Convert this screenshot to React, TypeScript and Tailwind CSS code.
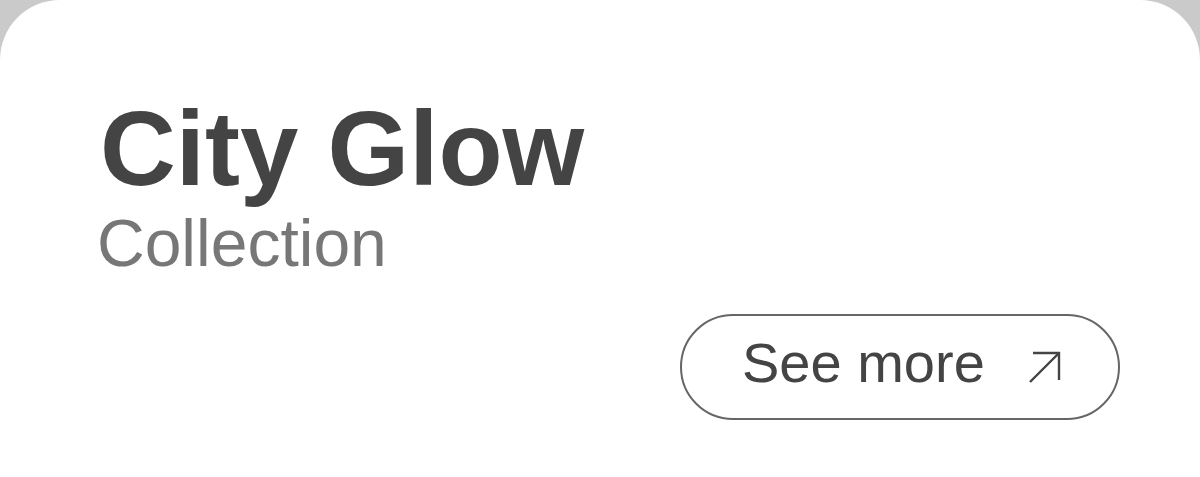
export default function App() {
  return (
    <main className="w-[1200px] h-[477px] bg-[#cacaca] overflow-hidden">
      <div className="h-full bg-white rounded-t-[60px] flex flex-col pl-[100px] pr-[80px] pt-[96px] font-['Liberation_Sans',Arial,sans-serif]">
        <h1 className="text-[105px] leading-none font-bold text-[#444444]">
          City Glow
        </h1>
        <p className="mt-[9px] -ml-[3px] text-[66px] leading-none text-[#777777]">
          Collection
        </p>

        <button
          type="button"
          className="self-end mt-[38px] w-[440px] h-[106px] rounded-full border-2 border-[#666666] flex items-center justify-between pl-[60px] pr-[56px] text-[#444444]"
        >
          <span className="mb-[8px] text-[56px] leading-none">See more</span>
          <svg
            width="34"
            height="34"
            viewBox="0 0 34 34"
            fill="none"
            stroke="#444444"
            strokeWidth="2.4"
          >
            <path d="M2 32 L31 3" />
            <path d="M5 3 H31 V30" />
          </svg>
        </button>
      </div>
    </main>
  );
}
